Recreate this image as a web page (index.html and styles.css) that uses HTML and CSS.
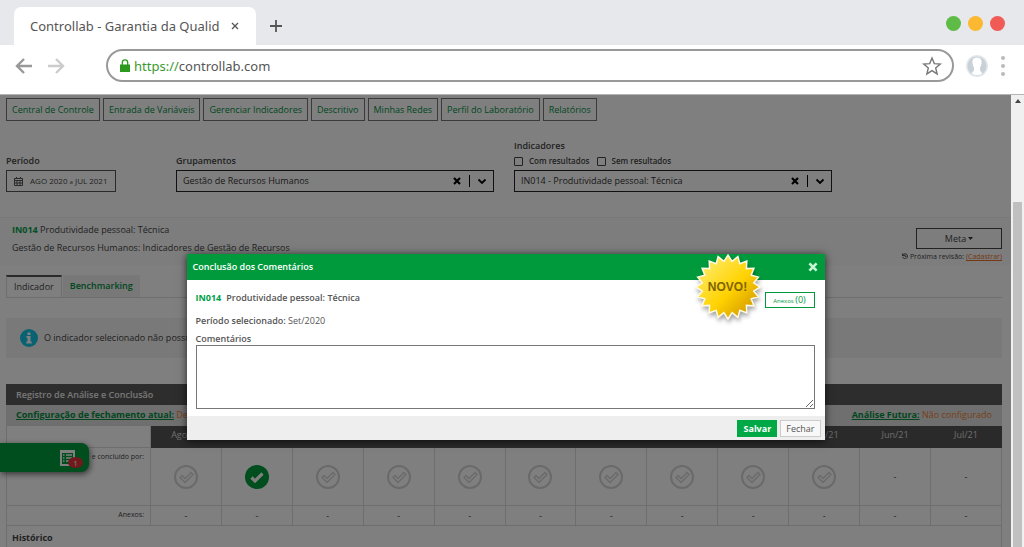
FILE: index.html
```html
<!DOCTYPE html>
<html lang="pt-BR">
<head>
<meta charset="utf-8">
<title>Controllab - Garantia da Qualidade</title>
<link rel="stylesheet" href="styles.css">
</head>
<body>
<svg class="defs" aria-hidden="true">
  <symbol id="check" viewBox="0 0 24 24"><circle cx="12" cy="12" r="11" fill="none" stroke="currentColor" stroke-width="2"/><path d="M6 12.500l2-2 3 3L17 7.500l2 2-8 8z" fill="none" stroke="currentColor" stroke-width="1.300"/></symbol>
  <symbol id="done" viewBox="0 0 24 24"><circle cx="12" cy="12" r="12" fill="currentColor"/><path d="M6.500 12.500l3.500 3.500 7.500-7.500" fill="none" stroke="#fff" stroke-width="3.200"/></symbol>
  <symbol id="cross" viewBox="0 0 10 10"><path d="M2 2l6 6M8 2l-6 6" fill="none" stroke="currentColor" stroke-width="2.200"/></symbol>
  <symbol id="chevron" viewBox="0 0 10 10"><path d="M1.500 3.500L5 7l3.500-3.500" fill="none" stroke="currentColor" stroke-width="1.800"/></symbol>
</svg>

<header class="browser">
  <div class="tabstrip">
    <div class="tab"><span>Controllab - Garantia da Qualid</span><button class="plain" aria-label="Fechar aba"><svg width="8" height="8" viewBox="0 0 8 8"><path d="M1 1l6 6M7 1L1 7" stroke="#555" stroke-width="1.300"/></svg></button></div>
    <button class="plain add" aria-label="Nova aba"><svg width="12" height="12" viewBox="0 0 12 12"><path d="M6 0v12M0 6h12" stroke="#555" stroke-width="1.800"/></svg></button>
    <div class="lights"><i class="green"></i><i class="yellow"></i><i class="red"></i></div>
  </div>
  <div class="toolbar">
    <button class="plain back" aria-label="Voltar"><svg width="18" height="16" viewBox="0 0 18 16"><path d="M9 1L2 8l7 7M2 8h15" fill="none" stroke="currentColor" stroke-width="2.400"/></svg></button>
    <button class="plain forward" aria-label="Avançar"><svg width="18" height="16" viewBox="0 0 18 16"><path d="M9 1l7 7-7 7M16 8H1" fill="none" stroke="currentColor" stroke-width="2.400"/></svg></button>
    <div class="address">
      <svg width="10" height="13" viewBox="0 0 10 13"><path d="M2.300 6V3.500a2.700 2.700 0 015.400 0V6" fill="none" stroke="#2b9a1f" stroke-width="1.300"/><path d="M0 5.500h10V13H0z" fill="#2b9a1f"/></svg>
      <span class="url"><span class="scheme">https://</span>controllab.com</span>
      <button class="plain" aria-label="Favorito"><svg width="20" height="20" viewBox="0 0 20 20"><path d="M10 2l2.300 5.600 6 .5-4.600 3.900 1.400 5.900L10 14.700l-5.100 3.200 1.400-5.900L1.700 8.100l6-.5z" fill="none" stroke="#777" stroke-width="1.400"/></svg></button>
    </div>
    <svg class="avatar" width="24" height="24" viewBox="0 0 24 24"><circle cx="12" cy="12" r="11" fill="#e3e8ed"/><circle cx="12" cy="12" r="9.500" fill="#c9d0d8"/><path d="M12 3.500c4 0 5 3 4.500 6-.3 2-1 3-1.500 4v2.500c0 1.500 2 1.500 2 3.500-2 2-8 2-10 0 0-2 2-2 2-3.500V13.500c-.5-1-1.200-2-1.500-4-.5-3 .5-6 4.500-6z" fill="#fff"/></svg>
    <button class="plain" aria-label="Menu"><svg width="4" height="20" viewBox="0 0 4 20"><g fill="#bbb"><circle cx="2" cy="2" r="2"/><circle cx="2" cy="10" r="2"/><circle cx="2" cy="18" r="2"/></g></svg></button>
  </div>
</header>

<div class="viewport">
  <div class="pane">
    <main class="page">
      <nav class="menu">
        <a href="#">Central de Controle</a><a href="#">Entrada de Variáveis</a><a href="#">Gerenciar Indicadores</a><a href="#">Descritivo</a><a href="#">Minhas Redes</a><a href="#">Perfil do Laboratório</a><a href="#">Relatórios</a>
      </nav>

      <form class="filters">
        <div class="field">
          <span class="label">Período</span>
          <button type="button" class="period"><svg width="9" height="9" viewBox="0 0 9 9"><path d="M.5 1.500h8v7h-8zM.5 3.500h8M2.500 0v2M6.500 0v2M3 3.500v5M6 3.500v5M.5 6h8" fill="none" stroke="#555"/></svg><span>AGO 2020 <small>a</small> JUL 2021</span></button>
        </div>
        <div class="field wide">
          <label class="label" for="group">Grupamentos</label>
          <div class="combo"><select id="group"><option>Gestão de Recursos Humanos</option></select><svg><use href="#cross"/></svg><i></i><svg><use href="#chevron"/></svg></div>
        </div>
        <div class="field wide">
          <label class="label" for="indicator">Indicadores</label>
          <div class="checks"><label><input type="checkbox">Com resultados</label><label><input type="checkbox">Sem resultados</label></div>
          <div class="combo"><select id="indicator"><option>IN014 - Produtividade pessoal: Técnica</option></select><svg><use href="#cross"/></svg><i></i><svg><use href="#chevron"/></svg></div>
        </div>
      </form>

      <section class="summary">
        <div><p><b class="code">IN014</b> Produtividade pessoal: Técnica</p><p>Gestão de Recursos Humanos: Indicadores de Gestão de Recursos</p></div>
        <div class="goal"><button class="meta">Meta <svg width="5" height="3" viewBox="0 0 5 3"><path d="M0 0h5L2.500 3z" fill="#333"/></svg></button>
          <p class="review"><svg width="6" height="6" viewBox="0 0 8 8"><path d="M1 3a3.300 3.300 0 110 2.500M.5.500v3h3M4 2v2.500h2" fill="none" stroke="#222"/></svg> Próxima revisão: <a href="#">(Cadastrar)</a></p></div>
      </section>

      <div class="tabs"><button class="active">Indicador</button><button>Benchmarking</button></div>

      <div class="notice"><svg width="18" height="18" viewBox="0 0 18 18"><circle cx="9" cy="9" r="9" fill="#10c4e4"/><path d="M7.500 3.500h3v2.500h-3zM6.500 7h4v5.500h1.200v2H6.300v-2h1.200V9h-1z" fill="#fff"/></svg>O indicador selecionado não possui</div>

      <table class="record">
        <colgroup><col class="first"><col span="12"></colgroup>
        <thead>
          <tr class="title"><th colspan="13">Registro de Análise e Conclusão</th></tr>
          <tr class="config"><td colspan="13"><div><span><a href="#">Configuração de fechamento atual:</a> Desabilitado</span><span><a href="#">Análise Futura:</a> Não configurado</span></div></td></tr>
          <tr class="months"><td></td><th>Ago/20</th><th>Set/20</th><th>Out/20</th><th>Nov/20</th><th>Dez/20</th><th>Jan/21</th><th>Fev/21</th><th>Mar/21</th><th>Abr/21</th><th>Mai/21</th><th>Jun/21</th><th>Jul/21</th></tr>
        </thead>
        <tbody>
          <tr class="status"><th>e concluído por:</th><td><svg><use href="#check"/></svg></td><td class="ok"><svg><use href="#done"/></svg></td><td><svg><use href="#check"/></svg></td><td><svg><use href="#check"/></svg></td><td><svg><use href="#check"/></svg></td><td><svg><use href="#check"/></svg></td><td><svg><use href="#check"/></svg></td><td><svg><use href="#check"/></svg></td><td><svg><use href="#check"/></svg></td><td><svg><use href="#check"/></svg></td><td>-</td><td>-</td></tr>
          <tr class="files"><th>Anexos:</th><td>-</td><td>-</td><td>-</td><td>-</td><td>-</td><td>-</td><td>-</td><td>-</td><td>-</td><td>-</td><td>-</td><td>-</td></tr>
          <tr class="history"><th colspan="13">Histórico</th></tr>
        </tbody>
      </table>
    </main>

    <button class="drawer" aria-label="Pendências"><svg width="15" height="16" viewBox="0 0 15 16"><path d="M0 0h15v16H0zM2 3v11h11V3z" fill="#fff" fill-rule="evenodd"/><path d="M3 5h1.500M6 5h6M3 8h1.500M6 8h6M3 11h1.500M6 11h6" stroke="#fff" stroke-width="1.500"/></svg><span>1</span></button>

    <div class="backdrop">
      <section class="modal" role="dialog" aria-labelledby="dialog-title">
        <header><h2 id="dialog-title">Conclusão dos Comentários</h2><button class="plain" aria-label="Fechar janela"><svg width="12" height="12"><use href="#cross"/></svg></button></header>
        <div class="body">
          <div class="top"><p><b class="code">IN014</b><b>Produtividade pessoal: Técnica</b></p><button class="attach">Anexos <span>(0)</span></button></div>
          <p class="selected"><b>Período selecionado:</b> Set/2020</p>
          <label for="comments">Comentários</label>
          <textarea id="comments"></textarea>
        </div>
        <footer><button class="save">Salvar</button><button class="close">Fechar</button></footer>
        <div class="badge">
          <svg viewBox="-36 -36 72 72"><defs><linearGradient id="gold" x1="0" y1="0" x2="1" y2="1"><stop offset="0.150" stop-color="#ffe95e"/><stop offset="0.550" stop-color="#ffd200"/><stop offset="0.850" stop-color="#d9a000"/><stop offset="1" stop-color="#f4bd00"/></linearGradient></defs>
          <polygon fill="url(#gold)" stroke="#fffbe6" stroke-width="1.500" points="32,0 25.700,4.100 30.400,9.900 23.200,11.800 25.900,18.800 18.400,18.400 18.800,25.900 11.800,23.200 9.900,30.400 4.100,25.700 0,32 -4.100,25.700 -9.900,30.400 -11.800,23.200 -18.800,25.900 -18.400,18.400 -25.900,18.800 -23.200,11.800 -30.400,9.900 -25.700,4.100 -32,0 -25.700,-4.100 -30.400,-9.900 -23.200,-11.800 -25.900,-18.800 -18.400,-18.400 -18.800,-25.900 -11.800,-23.200 -9.900,-30.400 -4.100,-25.700 0,-32 4.100,-25.700 9.900,-30.400 11.800,-23.200 18.800,-25.900 18.400,-18.400 25.900,-18.800 23.200,-11.800 30.400,-9.900 25.700,-4.100"/></svg>
          <span>NOVO!</span>
        </div>
      </section>
    </div>
  </div>
  <div class="scrollbar"><svg width="6" height="4" viewBox="0 0 6 4"><path d="M3 0l3 4H0z" fill="#444"/></svg><i></i></div>
</div>
</body>
</html>
```
FILE: styles.css
```css
* { box-sizing: border-box; }
body { margin: 0; height: 100vh; display: flex; flex-direction: column; overflow: hidden; background: #fff; color: #444; font: 9px/12px "Open Sans", "Noto Sans", sans-serif; }
p, h2 { margin: 0; }
button, select, textarea { font: inherit; color: inherit; }
a { color: #008f3f; }
svg { flex: none; }
.defs { position: absolute; width: 0; height: 0; }
.plain { display: flex; padding: 0; border: 0; background: none; }

.browser { flex: none; border-bottom: 1px solid #b4b4b4; font: 13px/20px "Noto Sans", sans-serif; color: #555; }
.tabstrip { display: flex; align-items: flex-end; height: 45px; padding: 0 19px 0 14px; background: #e7e8ec; }
.tab { display: flex; align-items: center; justify-content: space-between; width: 242px; height: 38px; padding: 0 17px 0 16px; border-radius: 7px 7px 0 0; background: #fff; }
.add { margin: 0 auto 13px 14px; }
.lights { display: flex; gap: 7px; margin-bottom: 14px; }
.lights i { width: 15px; height: 15px; border-radius: 50%; }
.green { background: #5dbb46; }
.yellow { background: #fbb830; }
.red { background: #f05b55; }
.toolbar { display: flex; align-items: center; height: 49px; padding: 0 19px 8px 15px; }
.back { color: #999; }
.forward { color: #ccc; margin-left: 14px; }
.address { flex: 1; display: flex; align-items: center; gap: 4px; height: 33px; margin: 0 11px 0 41px; padding: 0 10px 0 12px; border: 2px solid #999; border-radius: 17px; }
.url { flex: 1; }
.scheme { color: #3a9a30; }
.avatar { margin-right: 12px; }

.viewport { flex: 1; display: flex; min-height: 0; }
.pane { position: relative; flex: 1; min-width: 0; overflow: hidden; background: #fff; }
.scrollbar { display: flex; flex-direction: column; align-items: center; width: 13px; padding-top: 4px; background: #f0f0f0; }
.scrollbar i { flex: 1; width: 9px; margin-top: 99px; background: #c0c0c0; }

.menu { display: flex; gap: 3px; padding: 3px 6px 0; }
.menu a { padding: 4px 5px; border: 1px solid #777; line-height: 13px; text-decoration: none; }

.filters { display: flex; align-items: flex-end; gap: 20px; padding: 19px 6px 25px; }
.field { display: flex; flex-direction: column; width: 110px; }
.field:first-child { margin-right: 40px; }
.wide { width: 318px; }
.label { margin-bottom: 3px; font-weight: 600; }
.period { display: flex; align-items: center; gap: 7px; height: 22px; padding: 0 7px; border: 1px solid #555; background: none; font-size: 8px; white-space: nowrap; }
.period small { font-size: 6px; }
.checks { display: flex; gap: 7px; margin-bottom: 3px; font-size: 8px; font-weight: 600; }
.checks label { display: flex; align-items: center; gap: 6px; }
.checks input { appearance: none; width: 9px; height: 9px; margin: 0; border: 1px solid #444; border-radius: 1px; }
.combo { display: flex; align-items: center; gap: 7px; height: 22px; padding: 0 6px; border: 1px solid #222; color: #000; }
.combo select { flex: 1; appearance: none; padding: 0; border: 0; background: none; color: #333; }
.combo svg { width: 10px; height: 10px; }
.combo i { width: 1px; height: 12px; background: #000; }

.summary { display: flex; justify-content: space-between; height: 48px; padding: 6px 9px 0 12px; border-top: 1px solid #f0f0f0; background: #fafafa; }
.summary p + p { margin-top: 6px; }
.code { color: #00a04a; }
.goal { display: flex; flex-direction: column; align-items: flex-end; gap: 2px; padding-top: 4px; }
.meta { display: flex; align-items: center; justify-content: center; gap: 2px; width: 86px; height: 21px; border: 1px solid #444; background: none; }
.review { font-size: 7px; line-height: 12px; }
.review a { color: #e8702a; }

.tabs { display: flex; gap: 1px; margin: 10px 9px 20px 6px; border-bottom: 1px solid #ddd; }
.tabs button { height: 22px; padding: 0 7px; border: 0; background: #f0f0f0; color: #008f3f; font-weight: 600; }
.tabs .active { border: 1px solid #ddd; border-width: 2px 1px 0; border-top-color: #555; background: #fff; color: #444; font-weight: 400; }

.notice { display: flex; align-items: center; gap: 6px; height: 40px; margin: 0 9px 26px 6px; padding: 0 14px; background: #f2f2f2; }

.record { width: calc(100% - 15px); margin-left: 6px; border-collapse: collapse; table-layout: fixed; }
.record .first { width: 144px; }
.record th, .record td { padding: 0; border: 1px solid #dcdcdc; font-weight: 400; text-align: center; }
.record .title th { height: 20px; padding-left: 9px; border-color: #5a5a5a; background: #5a5a5a; color: #eee; text-align: left; font-weight: 600; }
.record .config td { height: 21px; padding: 0 9px; background: #dedede; color: #f08030; }
.config div { display: flex; justify-content: space-between; }
.config a { font-weight: 700; }
.record .months th { height: 22px; padding-bottom: 3px; border-color: #555; background: #555; color: #ddd; }
.status td { height: 58px; color: #d4d4d4; vertical-align: middle; }
.status td:nth-last-child(-n+2) { color: #444; }
.status .ok { color: #009a3d; }
.status svg { display: block; width: 24px; height: 24px; margin: 0 auto; }
.record .status th, .record .files th { padding: 3px 6px 0 0; font-size: 7px; line-height: 11px; text-align: right; vertical-align: top; }
.files td { height: 20px; }
.record .history th { height: 24px; padding-left: 5px; text-align: left; font-weight: 700; }

.drawer { position: absolute; left: 0; top: 348px; display: flex; align-items: center; justify-content: flex-end; width: 89px; height: 29px; padding: 0 14px 0 0; border: 0; border-radius: 0 8px 8px 0; background: #009a3d; box-shadow: 1px 2px 6px #666; }
.drawer span { position: absolute; right: 6px; bottom: 4px; width: 15px; height: 11px; border-radius: 50%; background: #e0343c; color: #fff; font-size: 8px; line-height: 11px; }

.backdrop { position: absolute; inset: 0; display: flex; align-items: flex-start; justify-content: center; padding-top: 159px; background: rgba(0, 0, 0, 0.5); }
.modal { position: relative; width: 90%; max-width: 638px; background: #fff; color: #555; box-shadow: 0 1px 8px rgba(0, 0, 0, 0.7); }
.modal header { display: flex; align-items: center; justify-content: space-between; height: 26px; padding: 0 6px; background: #009a3d; color: #fff; }
.modal header .plain { color: #c8f5d6; }
.modal h2 { font-size: 9px; font-weight: 600; }
.body { padding: 12px 10px 7px 9px; }
.body b { font-weight: 600; }
.top { display: flex; justify-content: space-between; height: 23px; }
.top .code { margin-right: 5px; font-weight: 700; }
.attach { width: 50px; height: 16px; padding: 0; border: 1px solid #009a3d; background: #fff; color: #009a3d; font-size: 6px; line-height: 12px; }
.attach span { font-size: 9px; }
.selected { margin-bottom: 6px; }
.body label { display: block; font-weight: 600; }
.body textarea { display: block; width: 100%; height: 64px; border: 1px solid #777; background: #fff; }
.modal footer { display: flex; justify-content: flex-end; gap: 3px; padding: 4px 4px 3px; background: #eee; }
.modal footer button { height: 17px; padding: 0 5px; border: 1px solid #ccc; background: #f8f8f8; line-height: 13px; }
.modal footer .save { border-color: #00a846; background: #00a846; color: #fff; font-weight: 700; }
.badge { position: absolute; top: -3px; right: 61px; width: 72px; height: 72px; display: flex; align-items: center; justify-content: center; }
.badge svg { position: absolute; inset: 0; filter: drop-shadow(1px 3px 2px rgba(0, 0, 0, 0.35)); }
.badge span { position: relative; color: #806400; font: bold 12px/14px "Liberation Sans", sans-serif; }
```
